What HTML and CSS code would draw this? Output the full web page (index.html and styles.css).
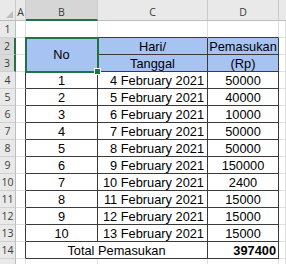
FILE: index.html
```html
<!DOCTYPE html>
<html>
<head>
<meta charset="utf-8">
<link rel="stylesheet" href="styles.css">
</head>
<body>
<div class="sheet">
  <!-- header row -->
  <div class="corner"><svg width="7" height="7" viewBox="0 0 7 7"><polygon points="7,0 7,7 0,7" fill="#bdbdbd"/></svg></div>
  <div class="ch">A</div>
  <div class="ch sel">B</div>
  <div class="ch">C</div>
  <div class="ch">D</div>
  <div class="ch last"></div>

  <!-- row 1 -->
  <div class="rh">1</div>
  <div class="c"></div>
  <div class="c top"></div>
  <div class="c top"></div>
  <div class="c top"></div>
  <div class="c"></div>

  <!-- row 2 -->
  <div class="rh rsel">2</div>
  <div class="c edge"></div>
  <div class="t head mid merge-v">No</div>
  <div class="t head">Hari/</div>
  <div class="t head">Pemasukan</div>
  <div class="c"></div>

  <!-- row 3 -->
  <div class="rh rsel">3</div>
  <div class="c edge"></div>
  <div class="t head">Tanggal</div>
  <div class="t head">(Rp)</div>
  <div class="c"></div>

  <div class="rh">4</div><div class="c edge"></div><div class="t">1</div><div class="t date">4 February 2021</div><div class="t">50000</div><div class="c"></div>
  <div class="rh">5</div><div class="c edge"></div><div class="t">2</div><div class="t date">5 February 2021</div><div class="t">40000</div><div class="c"></div>
  <div class="rh">6</div><div class="c edge"></div><div class="t">3</div><div class="t date">6 February 2021</div><div class="t">10000</div><div class="c"></div>
  <div class="rh">7</div><div class="c edge"></div><div class="t">4</div><div class="t date">7 February 2021</div><div class="t">50000</div><div class="c"></div>
  <div class="rh">8</div><div class="c edge"></div><div class="t">5</div><div class="t date">8 February 2021</div><div class="t">50000</div><div class="c"></div>
  <div class="rh">9</div><div class="c edge"></div><div class="t">6</div><div class="t date">9 February 2021</div><div class="t">150000</div><div class="c"></div>
  <div class="rh">10</div><div class="c edge"></div><div class="t">7</div><div class="t date">10 February 2021</div><div class="t">2400</div><div class="c"></div>
  <div class="rh">11</div><div class="c edge"></div><div class="t">8</div><div class="t date">11 February 2021</div><div class="t">15000</div><div class="c"></div>
  <div class="rh">12</div><div class="c edge"></div><div class="t">9</div><div class="t date">12 February 2021</div><div class="t">15000</div><div class="c"></div>
  <div class="rh">13</div><div class="c edge"></div><div class="t">10</div><div class="t date">13 February 2021</div><div class="t">15000</div><div class="c"></div>

  <!-- row 14 -->
  <div class="rh">14</div>
  <div class="c edge"></div>
  <div class="t merge-h">Total Pemasukan</div>
  <div class="t total">397400</div>
  <div class="c"></div>

  <!-- row 15 -->
  <div class="rh"></div>
  <div class="c"></div>
  <div class="c"></div>
  <div class="c"></div>
  <div class="c"></div>
  <div class="c"></div>

  <div class="selection"><span class="handle"></span></div>
</div>
</body>
</html>
```

FILE: styles.css
```css
html, body {
  margin: 0;
  padding: 0;
  background: #ffffff;
}

.sheet {
  position: relative;
  display: grid;
  grid-template-columns: 16px 10px 72px 110px 71px 1fr;
  grid-template-rows: 21px repeat(15, 17px);
  width: 286px;
  height: 264px;
  overflow: hidden;
  font-family: "Liberation Sans", Arial, sans-serif;
  font-size: 12.8px;
  color: #000;
}

.sheet > div {
  box-sizing: border-box;
}

.corner {
  background: #e9e9e9;
  border-right: 1px solid #c9c9c9;
  border-bottom: 1px solid #bdbdbd;
  display: flex;
  justify-content: flex-end;
  align-items: flex-end;
  padding: 0 2px 2px 0;
}

.ch {
  background: #e9e9e9;
  border-right: 1px solid #c9c9c9;
  border-bottom: 1px solid #bdbdbd;
  font-family: "Open Sans", "DejaVu Sans", sans-serif;
  font-size: 10.5px;
  color: #3c3c3c;
  display: flex;
  justify-content: center;
  align-items: flex-end;
  padding-bottom: 1px;
  line-height: 14px;
}

.ch.sel {
  background: #d6d6d6;
  border-bottom: 2px solid #217346;
  padding-bottom: 0;
}

.ch.last {
  border-right: none;
}

.rh {
  background: #e9e9e9;
  border-right: 1px solid #bdbdbd;
  border-bottom: 1px solid #d0d0d0;
  font-family: "Open Sans", "DejaVu Sans", sans-serif;
  font-size: 10.5px;
  color: #3c3c3c;
  display: flex;
  justify-content: center;
  align-items: center;
  line-height: 14px;
}

.rh.rsel {
  background: #d9d9d9;
  border-right: 2px solid #217346;
}

.c {
  border-right: 1px solid #dedede;
  border-bottom: 1px solid #dedede;
}

.c.top {
  border-bottom-color: #3a3a3a;
}

.c.edge {
  border-right-color: #3a3a3a;
}

.t {
  border-right: 1px solid #3a3a3a;
  border-bottom: 1px solid #3a3a3a;
  display: flex;
  justify-content: center;
  align-items: flex-end;
  line-height: 14px;
  white-space: nowrap;
  overflow: hidden;
}

.t.head {
  background: #a7c3f2;
}

.t.mid {
  align-items: center;
}

.merge-v {
  grid-row: span 2;
}

.merge-h {
  grid-column: span 2;
}

.t.date {
  justify-content: flex-end;
  padding-right: 3px;
}

.t.total {
  justify-content: flex-end;
  padding-right: 2px;
  font-weight: bold;
}

.selection {
  position: absolute;
  left: 25px;
  top: 37px;
  width: 74px;
  height: 36px;
  box-sizing: border-box;
  border: 2px solid #217346;
  pointer-events: none;
}

.handle {
  position: absolute;
  right: -4px;
  bottom: -4px;
  width: 5px;
  height: 5px;
  background: #217346;
  border: 1px solid #ffffff;
}
```
